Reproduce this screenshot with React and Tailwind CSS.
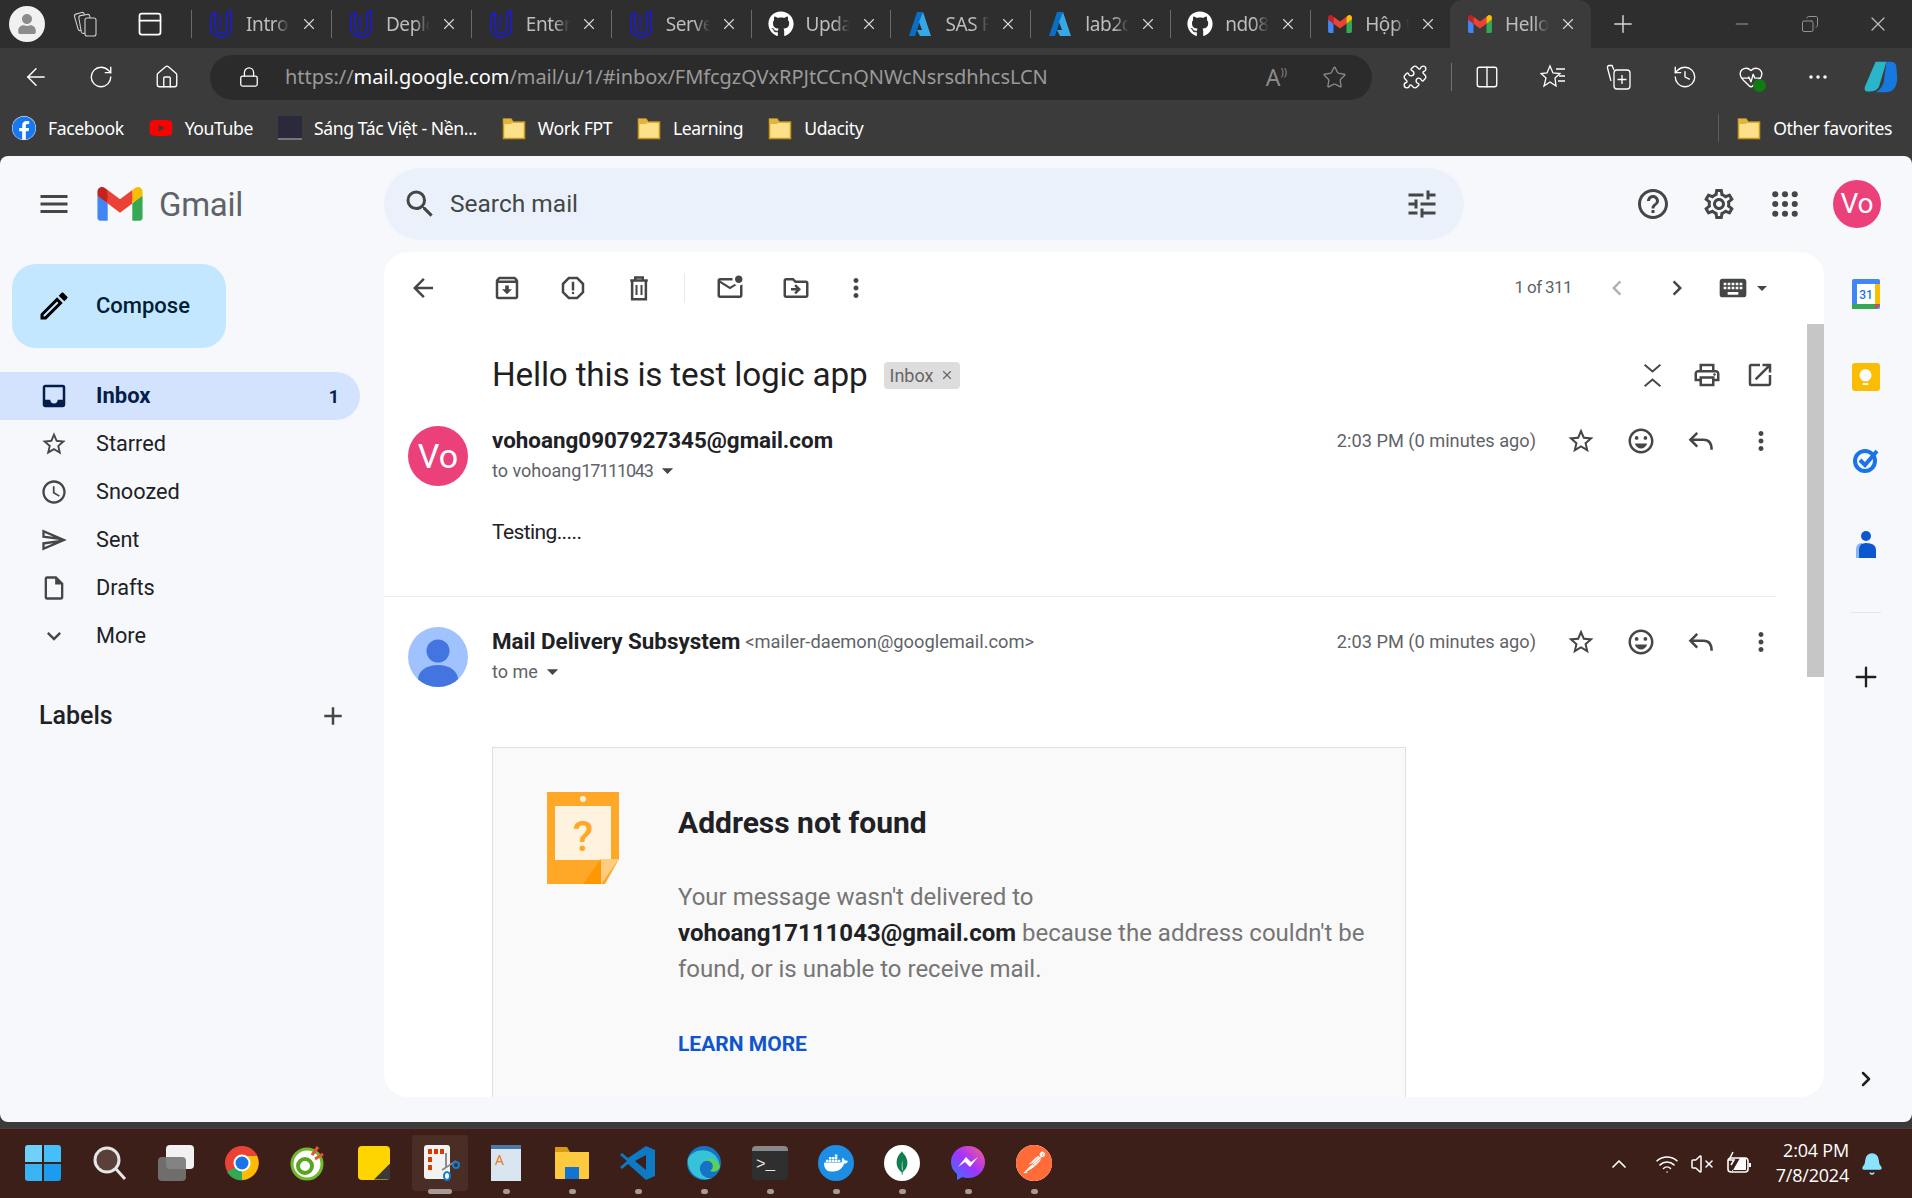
import {
  ArrowLeft, RotateCw, Home, Lock, Star, Puzzle, Columns2, History, HeartPulse, MoreHorizontal, Plus, Minus, X, Copy, PanelTop,
  ChevronUp, Wifi, VolumeX, Bell, ChevronRight,
} from 'lucide-react';
import {
  MdMenu, MdSearch, MdTune, MdHelpOutline, MdOutlineSettings, MdArrowBack, MdOutlineArchive, MdOutlineReport,
  MdOutlineMarkEmailUnread, MdOutlineDriveFileMove, MdMoreVert, MdChevronLeft, MdChevronRight, MdKeyboard, MdArrowDropDown, MdStarBorder,
  MdOutlineEmojiEmotions, MdOutlinePrint, MdOpenInNew, MdOutlineInsertDriveFile, MdAccessTime, MdInbox, MdOutlineSend, MdExpandMore,
  MdAdd, MdOutlineEdit,
} from 'react-icons/md';
import { FaGithub, FaFacebook, FaYoutube, FaUser } from 'react-icons/fa';
import { SiDocker, SiMongodb, SiPostman } from 'react-icons/si';

function GmailLogo({ className }) {
  return (
    <svg viewBox="0 0 256 193" className={className}>
      <path fill="#4285F4" d="M58.182 192.05V93.14L27.507 65.077 0 49.504v125.091c0 9.658 7.825 17.455 17.455 17.455h40.727Z" />
      <path fill="#34A853" d="M197.818 192.05h40.727c9.659 0 17.455-7.826 17.455-17.455V49.505l-31.156 17.837-27.026 25.798v98.91Z" />
      <path fill="#EA4335" d="m58.182 93.14-4.174-38.647 4.174-36.989L128 69.868l69.818-52.364 4.669 34.992-4.669 40.644L128 145.504z" />
      <path fill="#FBBC04" d="M197.818 17.504V93.14L256 49.504V26.231c0-21.585-24.64-33.89-41.89-20.945l-16.292 12.218Z" />
      <path fill="#C5221F" d="m0 49.504 26.759 20.07L58.182 93.14V17.504L41.89 5.286C24.61-7.66 0 4.646 0 26.23v23.273Z" />
    </svg>
  );
}

function UdacityIcon() {
  return (
    <svg viewBox="0 0 26 30" className="w-[26px] h-[28px]" fill="none" stroke="#1a1ae6" strokeWidth="1.6">
      <path d="M2 6 L7 3 V19 C7 23 10 25 13 24 C16 25 19 23 19 19 V3 L24 1 V20 C24 25 18 29 13 29 C8 29 2 25 2 20 Z" />
      <path d="M12 5 V20" />
    </svg>
  );
}

function AzureIcon() {
  return (
    <svg viewBox="0 0 24 26" className="w-[24px] h-[26px]">
      <path fill="#0a6fc4" d="M9 1 H15 L7 25 H1 Z" />
      <path fill="#35a8e8" d="M15 1 L23 25 H12 L9 19 H14 L11 11 Z" />
    </svg>
  );
}

function FolderIcon() {
  return (
    <svg viewBox="0 0 24 24" className="w-6 h-6">
      <path fill="#fde08a" stroke="#c59a1c" strokeWidth="1.5" d="M1.5 3 H9 L11 6 H22.5 V22.5 H1.5 Z" />
      <path fill="#e3b341" d="M1.5 3 H9 L11 6 L9 8 H1.5 Z" />
    </svg>
  );
}

function WorkspacesIcon() {
  return (
    <svg viewBox="0 0 28 28" className="ml-[27px] w-7 h-7" fill="#2e2e2e" stroke="#cfcfcf" strokeWidth="1.1">
      <rect x="4" y="3" width="10" height="17" rx="2" transform="rotate(-16 9 11)" />
      <rect x="8" y="5" width="11" height="18" rx="2" transform="rotate(-10 13 14)" />
      <rect x="13" y="8" width="11" height="18" rx="2" />
    </svg>
  );
}

const tabs = [
  { title: 'Introd', icon: <UdacityIcon /> },
  { title: 'Deplo', icon: <UdacityIcon /> },
  { title: 'Enterp', icon: <UdacityIcon /> },
  { title: 'Serve', icon: <UdacityIcon /> },
  { title: 'Upda', icon: <FaGithub className="w-[26px] h-[26px] text-white" /> },
  { title: 'SAS F', icon: <AzureIcon /> },
  { title: 'lab2d', icon: <AzureIcon /> },
  { title: 'nd08', icon: <FaGithub className="w-[26px] h-[26px] text-white" /> },
  { title: 'Hộp t', icon: <GmailLogo className="w-[24px] h-[18px]" /> },
];

function Tab({ tab, active }) {
  return (
    <div className={active
      ? 'w-[141px] h-12 shrink-0 flex items-center pl-[17px] bg-[#3b3b3b] rounded-t-xl'
      : 'w-[139.9px] h-12 shrink-0 flex items-center pl-[17px]'}>
      {!active && <div className="w-px h-7 bg-[#6a6a6a] -ml-[17px] mr-4" />}
      <div className="w-[26px] flex justify-center shrink-0">{tab.icon}</div>
      <div className="ml-[12px] w-[44px] overflow-hidden whitespace-nowrap text-[19px] tracking-[-0.4px] text-[#bdbdbd] [mask-image:linear-gradient(to_right,black_65%,transparent)]">
        {tab.title}
      </div>
      <X className="ml-[10px] w-[18px] h-[18px] text-[#d8d8d8]" strokeWidth={1.5} />
    </div>
  );
}

function TabStrip() {
  return (
    <div className="h-12 flex items-center bg-[#2e2e2e] text-white">
      <div className="w-[191px] h-12 shrink-0 flex items-center pl-[9px]">
        <div className="w-9 h-9 rounded-full bg-[#f1f1f1] flex items-center justify-center overflow-hidden">
          <FaUser className="w-5 h-5 text-[#8c8c8c]" />
        </div>
        <WorkspacesIcon />
        <PanelTop className="ml-[36px] w-7 h-7 text-white" strokeWidth={1.5} />
      </div>
      {tabs.map((t) => <Tab key={t.title} tab={t} />)}
      <Tab active tab={{ title: 'Hello', icon: <GmailLogo className="w-[24px] h-[18px]" /> }} />
      <Plus className="ml-[18px] w-7 h-7 text-[#d8d8d8]" strokeWidth={1.25} />
      <Minus className="ml-[95px] w-5 h-5 text-[#9a9a9a]" strokeWidth={1.25} />
      <Copy className="ml-[49px] w-[18px] h-[18px] text-[#9a9a9a] -scale-x-100" strokeWidth={1.25} />
      <X className="ml-[47px] w-6 h-6 text-[#bdbdbd]" strokeWidth={1.25} />
    </div>
  );
}

function FavoritesIcon() {
  return (
    <svg viewBox="0 0 26 26" className="ml-[40px] w-[26px] h-[26px]" fill="none" stroke="currentColor" strokeWidth="1.3">
      <path d="M10 2 L13 9 L20 9.5 L15 14 L16 22 L10 18 L4 22 L6 14 L1 9.5 L7 9 Z" />
      <path d="M16 5 H25 M19 12 H25 M18 17 H25" />
    </svg>
  );
}

function CollectionsIcon() {
  return (
    <svg viewBox="0 0 26 26" className="ml-[40px] w-[26px] h-[26px]" fill="none" stroke="currentColor" strokeWidth="1.3">
      <path d="M8 6 L6 1.5 H3 Q1 2 1.500 4 L5 17" />
      <rect x="8" y="6" width="16" height="19" rx="3" />
      <path d="M16 11 V20 M11.500 15.500 H20.500" />
    </svg>
  );
}

function AddressRow() {
  return (
    <div className="h-[58px] flex items-center bg-[#3b3b3b] text-white">
      <ArrowLeft className="ml-[22px] w-7 h-7" strokeWidth={1.25} />
      <RotateCw className="ml-[38px] w-[26px] h-[26px]" strokeWidth={1.25} />
      <Home className="ml-[40px] w-[26px] h-[26px]" strokeWidth={1.25} />
      <div className="ml-[30px] w-[1162px] h-[45px] rounded-full bg-[#2b2b2b] flex items-center pl-[28px] pr-[25px]">
        <Lock className="w-[22px] h-[22px] text-white" strokeWidth={1.4} />
        <div className="ml-[25px] text-[20px] tracking-[-0.05px] text-[#9a9a9a] whitespace-nowrap">
          https://<span className="text-white">mail.google.com</span>/mail/u/1/#inbox/FMfcgzQVxRPJtCCnQNWcNsrsdhhcsLCN
        </div>
        <div className="ml-auto flex items-center text-[#8a8a8a]">
          <span className="text-[23px] leading-none">A</span>
          <span className="text-[11px] leading-none mb-3">))</span>
          <Star className="ml-[35px] w-[25px] h-[25px]" strokeWidth={1.25} />
        </div>
      </div>
      <Puzzle className="ml-[30px] w-[26px] h-[26px]" strokeWidth={1.25} />
      <div className="ml-[23px] w-px h-7 bg-[#707070]" />
      <Columns2 className="ml-[22px] w-[26px] h-[26px]" strokeWidth={1.25} />
      <FavoritesIcon />
      <CollectionsIcon />
      <History className="ml-[40px] w-[26px] h-[26px]" strokeWidth={1.25} />
      <div className="ml-[40px] w-[26px] h-[26px] relative">
        <HeartPulse className="w-[26px] h-[26px]" strokeWidth={1.25} />
        <div className="absolute -right-[2px] -bottom-[2px] w-[13px] h-[13px] rounded-full bg-[#107c10]" />
      </div>
      <MoreHorizontal className="ml-[42px] w-6 h-6" strokeWidth={1.5} />
      <svg viewBox="0 0 40 40" className="ml-[33px] w-9 h-9">
        <path fill="#2bb5c9" d="M14 3 H26 L18 30 Q16 36 8 36 H5 Q1 36 2 31 Z" />
        <path fill="#1778e0" d="M26 3 H31 Q36 3 37 8 L38 20 Q38 36 26 37 H14 Q21 33 23 26 Z" />
      </svg>
    </div>
  );
}

function Bookmark({ icon, label, className }) {
  return (
    <div className={`flex items-center text-[17.6px] tracking-[-0.4px] text-white whitespace-nowrap ${className}`}>
      {icon}
      <span className="ml-3">{label}</span>
    </div>
  );
}

function BookmarksBar() {
  return (
    <div className="h-[50px] flex items-center bg-[#3b3b3b] pl-3 pr-5 pb-[6px]">
      <Bookmark className="" icon={<FaFacebook className="w-6 h-6 text-[#1877f2] bg-white rounded-full" />} label="Facebook" />
      <Bookmark className="ml-[25px]" icon={<FaYoutube className="w-6 h-6 text-[#f00]" />} label="YouTube" />
      <Bookmark className="ml-[25px]" icon={<div className="w-6 h-6 bg-[#2a2a3c] border-b-2 border-[#777]" />} label="Sáng Tác Việt - Nền..." />
      <Bookmark className="ml-[25px]" icon={<FolderIcon />} label="Work FPT" />
      <Bookmark className="ml-[25px]" icon={<FolderIcon />} label="Learning" />
      <Bookmark className="ml-[25px]" icon={<FolderIcon />} label="Udacity" />
      <div className="ml-auto w-px h-7 bg-[#5c5c5c]" />
      <Bookmark className="ml-[18px]" icon={<FolderIcon />} label="Other favorites" />
    </div>
  );
}

function AppsGrid() {
  return (
    <svg viewBox="0 0 24 24" className="ml-[35px] w-[26px] h-[26px] text-[#444746]" fill="currentColor">
      {[3, 12, 21].map((y) => [3, 12, 21].map((x) => <circle key={`${x}-${y}`} cx={x} cy={y} r="2.800" />))}
    </svg>
  );
}

function GmailHeader() {
  return (
    <div className="h-[96px] flex items-center">
      <div className="w-[384px] shrink-0 flex items-center">
        <MdMenu className="ml-[36px] w-9 h-9 text-[#444746]" />
        <GmailLogo className="ml-[25px] w-[46px] h-[34px]" />
        <span className="ml-[16px] text-[33px] leading-none text-[#5f6368] tracking-[-0.3px]">Gmail</span>
      </div>
      <div className="w-[1080px] h-[72px] rounded-full bg-[#eaf1fb] flex items-center pl-[18px] pr-[24px]">
        <MdSearch className="w-9 h-9 text-[#444746]" />
        <span className="ml-[12px] text-[24.5px] text-[#444746]">Search mail</span>
        <MdTune className="ml-auto w-9 h-9 text-[#444746]" />
      </div>
      <MdHelpOutline className="ml-[171px] w-9 h-9 text-[#444746]" />
      <MdOutlineSettings className="ml-[30px] w-9 h-9 text-[#444746]" />
      <AppsGrid />
      <div className="ml-[35px] w-12 h-12 rounded-full bg-[#ec407a] text-white text-[28px] flex items-center justify-center">Vo</div>
    </div>
  );
}

const navItems = [
  { label: 'Starred', icon: MdStarBorder },
  { label: 'Snoozed', icon: MdAccessTime },
  { label: 'Sent', icon: MdOutlineSend },
  { label: 'Drafts', icon: MdOutlineInsertDriveFile },
  { label: 'More', icon: MdExpandMore },
];

function Sidebar() {
  return (
    <div className="w-[384px] shrink-0">
      <div className="ml-3 mt-3 w-[214px] h-[84px] rounded-[24px] bg-[#c2e7ff] flex items-center pl-[24px]">
        <MdOutlineEdit className="w-9 h-9 text-black" />
        <span className="ml-[24px] -mt-[2px] text-[22px] font-medium text-[#001d35]">Compose</span>
      </div>
      <div className="mt-6 w-[360px]">
        <div className="h-12 rounded-r-full bg-[#d3e3fd] flex items-center pl-[39px] pr-[21px] text-[#041e49] font-bold text-[22px]">
          <MdInbox className="w-[30px] h-[30px]" />
          <span className="ml-[27px] -mt-[2px]">Inbox</span>
          <span className="ml-auto text-[18px]">1</span>
        </div>
        {navItems.map(({ label, icon: Icon }) => (
          <div key={label} className="h-12 flex items-center pl-[40px] text-[21.7px] text-[#202124]">
            <Icon className="w-[28px] h-[28px] text-[#444746]" />
            <span className="ml-[28px]">{label}</span>
          </div>
        ))}
      </div>
      <div className="mt-[38px] w-[360px] h-9 flex items-center pl-[39px] pr-[12px]">
        <span className="text-[25px] font-medium text-[#202124]">Labels</span>
        <MdAdd className="ml-auto w-[30px] h-[30px] text-[#444746]" />
      </div>
    </div>
  );
}

function IconSlot({ icon: Icon, className = 'w-[66px]', iconClass = 'w-[30px] h-[30px] text-[#444746]' }) {
  return (
    <div className={`flex items-center justify-center shrink-0 ${className}`}>
      <Icon className={iconClass} />
    </div>
  );
}

function TrashIcon({ className }) {
  return (
    <svg viewBox="0 0 24 24" className={className} fill="none" stroke="currentColor" strokeWidth="2">
      <path d="M5 6 H19 M9 6 V3.500 H15 V6" />
      <path d="M6.500 6 V21 H17.500 V6" />
      <path d="M10 9.500 V17.500 M14 9.500 V17.500" strokeWidth="1.600" />
    </svg>
  );
}

function ReplyIcon({ className }) {
  return (
    <svg viewBox="0 0 24 24" className={className} fill="none" stroke="currentColor" strokeWidth="2">
      <path d="M9 5.500 L3.500 11 L9 16.500" />
      <path d="M3.500 11 H14 Q20.500 11 20.500 19" />
    </svg>
  );
}

function CollapseIcon({ className }) {
  return (
    <svg viewBox="0 0 24 24" className={className} fill="none" stroke="currentColor" strokeWidth="1.700">
      <path d="M5 2.500 L12 8.500 L19 2.500" />
      <path d="M5 21.500 L12 15.500 L19 21.500" />
    </svg>
  );
}

function Toolbar() {
  return (
    <div className="h-[72px] flex items-center pl-[9px] pr-[50px]">
      <IconSlot icon={MdArrowBack} className="w-[60px]" />
      <div className="w-[21px]" />
      <IconSlot icon={MdOutlineArchive} />
      <IconSlot icon={MdOutlineReport} />
      <IconSlot icon={TrashIcon} />
      <div className="ml-3 mr-3 w-px h-[30px] bg-[#e8eaed]" />
      <IconSlot icon={MdOutlineMarkEmailUnread} />
      <IconSlot icon={MdOutlineDriveFileMove} />
      <IconSlot icon={MdMoreVert} className="w-[54px]" />
      <span className="ml-auto text-[17px] text-[#5f6368] tracking-[-0.6px]">1 of 311</span>
      <IconSlot icon={MdChevronLeft} className="ml-[27px] w-9" iconClass="w-[30px] h-[30px] text-[#b0b3b5]" />
      <IconSlot icon={MdChevronRight} className="ml-[24px] w-9" />
      <IconSlot icon={MdKeyboard} className="ml-[20px] w-9" iconClass="w-[32px] h-[32px] text-[#444746]" />
      <IconSlot icon={MdArrowDropDown} className="w-[24px] -ml-[1px]" iconClass="w-[30px] h-[30px] text-[#444746]" />
    </div>
  );
}

function MessageHeader({ avatar, sender, to }) {
  return (
    <div className="flex pl-[24px] pr-[16px]">
      {avatar}
      <div className="ml-[24px]">
        <div className="h-[30px] flex items-center text-[22.4px] text-[#202124] whitespace-nowrap">{sender}</div>
        <div className="h-[30px] -mt-[1px] flex items-center text-[18px] text-[#5f6368]">
          {to}
          <MdArrowDropDown className="ml-[1px] w-[27px] h-[27px] text-[#444746]" />
        </div>
      </div>
      <div className="ml-auto h-[30px] flex items-center">
        <span className="mr-[15px] text-[18.2px] text-[#5f6368] whitespace-nowrap">2:03 PM (0 minutes ago)</span>
        <IconSlot icon={MdStarBorder} className="w-[60px]" />
        <IconSlot icon={MdOutlineEmojiEmotions} className="w-[60px]" />
        <IconSlot icon={ReplyIcon} className="w-[60px]" />
        <IconSlot icon={MdMoreVert} className="w-[60px]" />
      </div>
    </div>
  );
}

function NotFoundIcon() {
  return (
    <svg viewBox="0 0 72 92" className="w-[72px] h-[92px] shrink-0">
      <path fill="#ffa726" d="M0 0 H72 V67 L58 92 H0 Z" />
      <rect x="8" y="14" width="56" height="54" fill="#fff3e0" />
      <circle cx="36" cy="7" r="3" fill="#fff3e0" />
      <path fill="#ff9800" d="M36 92 L54 67 V92 Z" />
      <path fill="#ffcc80" d="M54 67 H72 L54 92 Z" />
      <text x="36" y="59" textAnchor="middle" fontSize="42" fontFamily="Roboto, sans-serif" fill="#ffa726" fontWeight="500">?</text>
    </svg>
  );
}

function DeliveryCard() {
  return (
    <div className="mt-[60px] ml-[108px] w-[914px] min-h-[400px] border border-[#e0e0e0] bg-[#f9f9f9] flex pl-[54px] pt-[44px]">
      <NotFoundIcon />
      <div className="ml-[59px]">
        <div className="mt-[13px] text-[30px] leading-[36px] font-bold text-[#202124]">Address not found</div>
        <div className="mt-[38px] text-[24px] leading-[36px] text-[#757575] whitespace-nowrap">
          Your message wasn't delivered to<br />
          <span className="font-bold text-[#202124]">vohoang17111043@gmail.com</span> because the address couldn't be<br />
          found, or is unable to receive mail.
        </div>
        <div className="mt-[42px] text-[21px] leading-[30px] font-bold text-[#1155cc]">LEARN MORE</div>
      </div>
    </div>
  );
}

function MainCard() {
  return (
    <div className="w-[1440px] h-[845px] shrink-0 rounded-[24px] bg-white overflow-hidden flex flex-col">
      <Toolbar />
      <div className="flex flex-1 min-h-0">
        <div className="w-[1423px] shrink-0 overflow-hidden">
          <div className="h-[102px] flex items-center pl-[108px] pr-[29px]">
            <span className="text-[33.3px] text-[#1f1f1f] tracking-[-0.2px] whitespace-nowrap">Hello this is test logic app</span>
            <span className="ml-[16px] h-[27px] px-[6px] rounded bg-[#dddddd] text-[18px] text-[#666666] flex items-center">
              Inbox
              <X className="ml-[6px] w-[14px] h-[14px]" strokeWidth={2} />
            </span>
            <IconSlot icon={CollapseIcon} className="ml-auto w-9" iconClass="w-[27px] h-[27px] text-[#444746]" />
            <IconSlot icon={MdOutlinePrint} className="ml-[19px] w-9" />
            <IconSlot icon={MdOpenInNew} className="ml-[17px] w-9" />
          </div>
          <MessageHeader
            avatar={<div className="w-[60px] h-[60px] rounded-full bg-[#ec407a] text-white text-[34px] flex items-center justify-center">Vo</div>}
            sender={<span className="font-bold">vohoang0907927345@gmail.com</span>}
            to={<span>to vohoang<span className="tracking-[-1.2px]">17111043</span></span>}
          />
          <div className="mt-[31px] pl-[108px] text-[21px] leading-[30px] tracking-[-0.6px] text-[#222222]">Testing.....</div>
          <div className="mt-[49px] w-[1392px] h-px bg-[#e8eaed]" />
          <div className="mt-[30px]">
            <MessageHeader
              avatar={
                <svg viewBox="0 0 60 60" className="w-[60px] h-[60px] shrink-0">
                  <defs><clipPath id="sender-avatar"><circle cx="30" cy="30" r="30" /></clipPath></defs>
                  <circle cx="30" cy="30" r="30" fill="#a0c3ff" />
                  <circle cx="30" cy="24" r="11.500" fill="#4374e0" />
                  <ellipse cx="30" cy="52" rx="20" ry="14" fill="#4374e0" clipPath="url(#sender-avatar)" />
                </svg>
              }
              sender={<><span className="font-bold">Mail Delivery Subsystem</span><span className="ml-[5px] text-[18.3px] text-[#5f6368]">&lt;mailer-daemon@googlemail.com&gt;</span></>}
              to="to me"
            />
          </div>
          <DeliveryCard />
        </div>
        <div className="w-[17px] shrink-0">
          <div className="h-[353px] bg-[#c6c6c6]" />
        </div>
      </div>
    </div>
  );
}

function RightPanel() {
  return (
    <div className="w-[88px] shrink-0 h-[847px] pr-[5px] flex flex-col items-center text-[#1f1f1f]">
      <svg viewBox="0 0 28 30" className="mt-[27px] w-[28px] h-[30px]">
        <rect x="0" y="0" width="28" height="30" rx="2" fill="#4285f4" />
        <rect x="5" y="5" width="18" height="20" fill="#fff" />
        <rect x="23" y="5" width="5" height="20" fill="#fbbc04" />
        <rect x="0" y="25" width="23" height="5" fill="#34a853" />
        <path d="M23 25 H28 L23 30 Z" fill="#ea4335" />
        <text x="14" y="20" textAnchor="middle" fontSize="12" fontFamily="Roboto, sans-serif" fontWeight="500" fill="#1a73e8">31</text>
      </svg>
      <div className="mt-[54px] w-[28px] h-[28px] rounded-[3px] bg-[#fbbc04] flex items-center justify-center">
        <svg viewBox="0 0 14 18" className="w-[13px] h-[17px]">
          <path fill="#fff" d="M7 0 A6.500 6.500 0 0 1 10 12.200 V13 H4 V12.200 A6.500 6.500 0 0 1 7 0 Z" />
          <rect x="4" y="15" width="6" height="2" fill="#fff" />
        </svg>
      </div>
      <svg viewBox="0 0 28 28" className="mt-[55px] w-[28px] h-[28px]" fill="none">
        <circle cx="13" cy="15" r="10" stroke="#1a73e8" strokeWidth="4" />
        <path d="M8 14 L13 19 L25 5" stroke="#1a73e8" strokeWidth="4" />
      </svg>
      <svg viewBox="0 0 20 28" className="mt-[56px] w-[20px] h-[28px]">
        <circle cx="10" cy="6" r="5" fill="#0b57d0" />
        <path d="M0 28 V20 Q0 13 6 13 V28 Z" fill="#8ab4f8" />
        <path d="M3 28 V20 Q3 13 10 13 Q20 13 20 20 V28 Z" fill="#0b57d0" />
      </svg>
      <div className="mt-[54px] w-[30px] h-px bg-[#e3e6ea]" />
      <Plus className="mt-[48px] w-8 h-8" strokeWidth={1.75} />
      <ChevronRight className="mt-auto mb-[8px] w-6 h-6" strokeWidth={2.5} />
    </div>
  );
}

function Gmail() {
  return (
    <div className="h-[966px] bg-[#f6f8fc] rounded-lg overflow-hidden font-['Roboto',sans-serif]">
      <GmailHeader />
      <div className="flex">
        <Sidebar />
        <MainCard />
        <RightPanel />
      </div>
    </div>
  );
}

function TaskIcon({ children, dot = true, active }) {
  return (
    <div className="w-[66px] h-[70px] shrink-0 flex flex-col items-center justify-end pb-[5px]">
      <div className={active ? 'w-14 h-14 rounded bg-[#4a2e26] flex items-center justify-center' : 'w-14 h-14 flex items-center justify-center'}>{children}</div>
      {dot
        ? <div className={active ? '-mt-[2px] w-6 h-[5px] rounded-full bg-[#a89a96]' : '-mt-[2px] w-[7px] h-[5px] rounded-full bg-[#a89a96]'} />
        : <div className="-mt-[2px] h-[5px]" />}
    </div>
  );
}

function Taskbar() {
  return (
    <div className="h-[70px] flex items-center bg-[#3b1f18] border-t border-[#54392f] pl-[11px] pr-[28px] text-white">
      <TaskIcon dot={false}>
        <div className="-ml-[3px] w-[36px] h-[36px] grid grid-cols-2 gap-[2px]">
          <div className="bg-[#6fd0fb] rounded-tl-[3px]" /><div className="bg-[#46bff8] rounded-tr-[3px]" />
          <div className="bg-[#38b4f5] rounded-bl-[3px]" /><div className="bg-[#1a9df0] rounded-br-[3px]" />
        </div>
      </TaskIcon>
      <TaskIcon dot={false}>
        <svg viewBox="0 0 36 36" className="w-9 h-9" fill="#5b3f3a" stroke="#e6e6e6" strokeWidth="3"><circle cx="15" cy="15" r="12" /><path d="M24 24 L33 34" /></svg>
      </TaskIcon>
      <TaskIcon dot={false}>
        <div className="w-9 h-9 flex flex-col items-end">
          <div className="w-7 h-6 bg-[#f2f2f2] rounded-sm" />
          <div className="-mt-3 mr-2 w-7 h-6 bg-[#777777]/90 rounded-sm" />
        </div>
      </TaskIcon>
      <TaskIcon dot={false}>
        <svg viewBox="0 0 36 36" className="w-9 h-9">
          <circle cx="18" cy="18" r="17" fill="#ea4335" />
          <path d="M18 18 L3 27 A17 17 0 0 0 24 34 Z" fill="#34a853" />
          <path d="M18 11 H33 A17 17 0 0 1 18 35 Z" fill="#fbbc04" />
          <circle cx="18" cy="18" r="8.500" fill="#fff" /><circle cx="18" cy="18" r="6.500" fill="#1a73e8" />
        </svg>
      </TaskIcon>
      <TaskIcon dot={false}>
        <svg viewBox="0 0 36 36" className="w-9 h-9" fill="none">
          <circle cx="17" cy="19" r="15" fill="#fff" stroke="#6fb92c" strokeWidth="3" />
          <circle cx="15" cy="21" r="7" stroke="#5aa51f" strokeWidth="4" />
          <path d="M22 10 L28 2 M25 14 L33 9" stroke="#e4572e" strokeWidth="3" />
        </svg>
      </TaskIcon>
      <TaskIcon dot={false}>
        <div className="w-8 h-[34px] bg-[#ffd500] flex items-end justify-end rounded-sm">
          <div className="w-4 h-4 bg-[#3a3a3a] [clip-path:polygon(100%_0,100%_100%,0_100%)]" />
        </div>
      </TaskIcon>
      <TaskIcon active>
        <svg viewBox="0 0 40 40" className="w-10 h-10" fill="none">
          <rect x="4" y="2" width="26" height="34" rx="3" fill="#f2f2f2" />
          <rect x="8" y="6" width="4" height="5" fill="#d83b01" /><rect x="14" y="6" width="4" height="5" fill="#d83b01" /><rect x="20" y="6" width="4" height="5" fill="#d83b01" />
          <rect x="8" y="14" width="4" height="5" fill="#d83b01" /><rect x="8" y="22" width="4" height="5" fill="#d83b01" />
          <path d="M26 10 V24 M36 18 L22 27" stroke="#8c8c8c" strokeWidth="2" />
          <circle cx="36" cy="22" r="3" stroke="#0f7ed6" strokeWidth="2" /><ellipse cx="27" cy="33" rx="3" ry="4" stroke="#0f7ed6" strokeWidth="2" />
        </svg>
      </TaskIcon>
      <TaskIcon>
        <div className="w-[30px] h-9 bg-[#d9e6f2] border-t-4 border-[#4a7aa8] flex items-start pl-1 pt-1 text-[#e67e22] text-[14px] leading-none">A</div>
      </TaskIcon>
      <TaskIcon>
        <svg viewBox="0 0 36 36" className="w-9 h-9">
          <path fill="#d99a11" d="M1 2 H13 L16 7 H35 V14 H1 Z" />
          <rect x="1" y="7" width="34" height="27" rx="1" fill="#fcc93f" />
          <rect x="11" y="22" width="14" height="12" fill="#1173d4" />
        </svg>
      </TaskIcon>
      <TaskIcon>
        <svg viewBox="0 0 36 36" className="w-9 h-9">
          <path fill="#0e7ac4" d="M26 1 L35 5 V31 L26 35 L8 19 L2 24 L0 22 L7 16 L0 10 L2 8 L8 13 Z M26 10 L15 16 L26 25 Z" />
        </svg>
      </TaskIcon>
      <TaskIcon>
        <svg viewBox="0 0 36 36" className="w-9 h-9" fill="none">
          <circle cx="18" cy="18" r="17" fill="#1672c2" />
          <path d="M2 14 C6 2 32 0 34 22 C28 12 16 14 14 22 C13 28 18 34 26 33 C12 38 0 26 2 14 Z" fill="#36c3d9" />
          <path d="M34 22 C32 13 22 12 18 16 C26 14 30 22 24 26 C30 28 33 25 34 22 Z" fill="#58d05a" />
        </svg>
      </TaskIcon>
      <TaskIcon>
        <div className="w-9 h-[34px] rounded bg-[#2f2f2f] border-t-[5px] border-[#888] flex items-center pl-1 text-[#e8e8e8] text-[16px] leading-none font-mono">
          &gt;_
        </div>
      </TaskIcon>
      <TaskIcon>
        <div className="w-9 h-9 rounded-full bg-[#1d8ee6] flex items-center justify-center"><SiDocker className="w-6 h-6 text-white" /></div>
      </TaskIcon>
      <TaskIcon>
        <div className="w-9 h-9 rounded-full bg-white flex items-center justify-center"><SiMongodb className="w-6 h-6 text-[#0f7f4f]" /></div>
      </TaskIcon>
      <TaskIcon>
        <svg viewBox="0 0 36 36" className="w-9 h-9">
          <defs>
            <linearGradient id="messenger-fill" x1="0" y1="1" x2="1" y2="0">
              <stop offset="0" stopColor="#2f7bff" /><stop offset="0.5" stopColor="#a033ff" /><stop offset="1" stopColor="#ff5c87" />
            </linearGradient>
          </defs>
          <path fill="url(#messenger-fill)" d="M18 1 C8 1 1 8.500 1 17 C1 22 3 26 7 29 V35 L12.500 32 C14.500 32.600 16 33 18 33 C28 33 35 25.500 35 17 C35 8.500 28 1 18 1 Z" />
          <path fill="#fff" d="M8 22 L16 12 L21 17 L28 12 L20 22 L15 17 Z" />
        </svg>
      </TaskIcon>
      <TaskIcon>
        <div className="w-9 h-9 rounded-full bg-white flex items-center justify-center"><SiPostman className="w-9 h-9 text-[#ff6c37]" /></div>
      </TaskIcon>
      <ChevronUp className="ml-auto w-6 h-6" strokeWidth={1.75} />
      <Wifi className="ml-[24px] w-6 h-6" strokeWidth={1.5} />
      <VolumeX className="ml-[11px] w-6 h-6" strokeWidth={1.5} />
      <svg viewBox="0 0 26 26" className="ml-[12px] w-[26px] h-[26px]" fill="none" stroke="currentColor" strokeWidth="1.600">
        <rect x="2" y="7" width="20" height="14" rx="3" />
        <path d="M24 12 V16" strokeWidth="2" />
        <path d="M6 21 L14 7 H20 V19 H6 Z" fill="currentColor" stroke="none" />
        <path d="M7 1 L3 9 H8 L5 14" strokeWidth="1.500" />
      </svg>
      <div className="ml-[13px] -mt-[2px] w-[84px] text-right text-[18px] leading-[25px] font-['Open_Sans',sans-serif] tracking-[-0.2px] whitespace-nowrap">
        <div>2:04 PM</div>
        <div>7/8/2024</div>
      </div>
      <Bell className="ml-[11px] w-6 h-6 text-[#8be4ff] fill-[#8be4ff]" strokeWidth={1.5} />
    </div>
  );
}

export default function App() {
  return (
    <div className="w-[1912px] h-[1198px] overflow-hidden flex flex-col bg-[#3b3b3b] font-['Noto_Sans',sans-serif]">
      <TabStrip />
      <AddressRow />
      <BookmarksBar />
      <Gmail />
      <div className="h-[6px] bg-[#3b3b3b]" />
      <Taskbar />
    </div>
  );
}
